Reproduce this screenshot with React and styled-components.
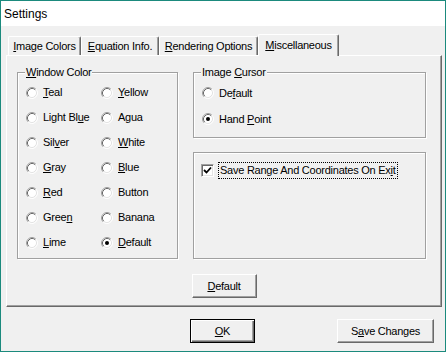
import React from "react";
import styled, { createGlobalStyle, css } from "styled-components";

const GlobalStyle = createGlobalStyle`
  html, body {
    margin: 0;
    padding: 0;
    background: #ffffff;
  }
  body {
    font-family: "Liberation Sans", Arial, sans-serif;
    font-size: 11px;
    color: #000;
  }
`;

const Window = styled.div`
  width: 446px;
  height: 352px;
  box-sizing: border-box;
  border: 1px solid #1b8a7d;
  background: #f0f0f0;
  display: flex;
  flex-direction: column;
`;

const TitleBar = styled.div`
  height: 25px;
  flex: none;
  background: #ffffff;
  display: flex;
  align-items: center;
  padding-left: 3px;
  font-size: 12px;
`;

const Body = styled.div`
  flex: 1;
  padding: 8px 3px 0 5px;
  display: flex;
  flex-direction: column;
  letter-spacing: -0.25px;
`;

const TabRow = styled.div`
  display: flex;
  align-items: flex-end;
  height: 21px;
  padding-left: 2px;
`;

const Tab = styled.div`
  width: ${(p) => p.$w}px;
  height: ${(p) => (p.$active ? 22 : 19)}px;
  margin-bottom: ${(p) => (p.$active ? -1 : 0)}px;
  padding-bottom: ${(p) => (p.$active ? 2 : 0)}px;
  box-sizing: border-box;
  position: relative;
  z-index: ${(p) => (p.$active ? 1 : 0)};
  border-top: 1px solid #ffffff;
  border-left: 1px solid #ffffff;
  border-right: 1px solid #696969;
  box-shadow: inset -1px 0 #a0a0a0;
  border-radius: 2px 2px 0 0;
  background: #f0f0f0;
  display: flex;
  align-items: center;
  justify-content: center;
  white-space: nowrap;
`;

const Panel = styled.div`
  height: 252px;
  box-sizing: border-box;
  border-top: 1px solid #ffffff;
  border-left: 1px solid #ffffff;
  border-right: 1px solid #696969;
  border-bottom: 1px solid #696969;
  box-shadow: inset -1px -1px #a0a0a0;
  display: flex;
  flex-direction: column;
`;

const Columns = styled.div`
  display: grid;
  grid-template-columns: 161px 233px;
  column-gap: 15px;
  height: 187px;
  margin: 16px 0 0 10px;
`;

const Stack = styled.div`
  display: flex;
  flex-direction: column;
  gap: 14px;
`;

const Group = styled.div`
  position: relative;
  box-sizing: border-box;
  height: ${(p) => p.$h}px;
  border: 1px solid #a0a0a0;
  box-shadow: inset 1px 1px #ffffff, 1px 1px #ffffff;
  padding: ${(p) => p.$pad};
`;

const Legend = styled.span`
  position: absolute;
  top: -7px;
  left: 7px;
  padding: 0 1px;
  line-height: 13px;
  background: #f0f0f0;
`;

const RadioGrid = styled.div`
  display: grid;
  grid-template-columns: 75px auto;
  grid-auto-rows: 25px;
`;

const RadioList = styled.div`
  display: grid;
  grid-auto-rows: 26px;
`;

const Option = styled.div`
  display: flex;
  align-items: center;
  gap: 5px;
  line-height: 13px;
  white-space: nowrap;
`;

const Check = styled.span`
  width: 13px;
  height: 13px;
  box-sizing: border-box;
  flex: none;
  background: #ffffff;
  border-top: 1px solid #a0a0a0;
  border-left: 1px solid #a0a0a0;
  border-right: 1px solid #ffffff;
  border-bottom: 1px solid #ffffff;
  box-shadow: inset 1px 1px #696969, inset -1px -1px #e3e3e3;
  display: flex;
  align-items: center;
  justify-content: center;
`;

const Focus = styled.span`
  outline: 1px dotted #000;
  outline-offset: 0;
  padding: 1px 1px;
  line-height: 13px;
`;

const ButtonRow = styled.div`
  display: flex;
  justify-content: ${(p) => p.$justify || "flex-start"};
  gap: ${(p) => p.$gap || 0}px;
  margin-top: ${(p) => p.$top}px;
  padding-left: ${(p) => p.$left || 0}px;
`;

const Button = styled.button`
  font: inherit;
  letter-spacing: inherit;
  color: #000;
  width: ${(p) => p.$w}px;
  height: 24px;
  padding: 0;
  box-sizing: border-box;
  background: #f0f0f0;
  border: 1px solid;
  border-color: #ffffff #696969 #696969 #ffffff;
  box-shadow: inset -1px -1px #a0a0a0;
  ${(p) =>
    p.$primary &&
    css`
      border-color: #000;
      box-shadow: inset 1px 1px #ffffff, inset -1px -1px #696969,
        inset -2px -2px #a0a0a0;
    `}
`;

function Radio({ checked }) {
  return (
    <svg width="12" height="12" viewBox="0 0 12 12" style={{ flex: "none" }}>
      <circle cx="6" cy="6" r="5" fill="#ffffff" />
      <path d="M2.11 9.89 A5.5 5.5 0 0 1 9.89 2.11" stroke="#a0a0a0" fill="none" />
      <path d="M9.89 2.11 A5.5 5.5 0 0 1 2.11 9.89" stroke="#ffffff" fill="none" />
      <path d="M2.82 9.18 A4.5 4.5 0 0 1 9.18 2.82" stroke="#696969" fill="none" />
      <path d="M9.18 2.82 A4.5 4.5 0 0 1 2.82 9.18" stroke="#e3e3e3" fill="none" />
      {checked && <circle cx="6" cy="6" r="2" fill="#000" />}
    </svg>
  );
}

const colors = [
  [<><u>T</u>eal</>, false],
  [<><u>Y</u>ellow</>, false],
  [<>Light Bl<u>u</u>e</>, false],
  [<>Agua</>, false],
  [<>Sil<u>v</u>er</>, false],
  [<><u>W</u>hite</>, false],
  [<><u>G</u>ray</>, false],
  [<><u>B</u>lue</>, false],
  [<><u>R</u>ed</>, false],
  [<>Button</>, false],
  [<>Gree<u>n</u></>, false],
  [<>Banana</>, false],
  [<><u>L</u>ime</>, false],
  [<><u>D</u>efault</>, true],
];

export default function App() {
  return (
    <>
      <GlobalStyle />
      <Window>
        <TitleBar>Settings</TitleBar>
        <Body>
          <TabRow>
            <Tab $w={73}><span><u>I</u>mage Colors</span></Tab>
            <Tab $w={78}><span><u>E</u>quation Info.</span></Tab>
            <Tab $w={99}><span><u>R</u>endering Options</span></Tab>
            <Tab $w={81} $active><span><u>M</u>iscellaneous</span></Tab>
          </TabRow>
          <Panel>
            <Columns>
              <Group $h={187} $pad="7px 0 0 8px">
                <Legend><u>W</u>indow Color</Legend>
                <RadioGrid>
                  {colors.map(([label, checked], i) => (
                    <Option key={i}>
                      <Radio checked={checked} />
                      <span>{label}</span>
                    </Option>
                  ))}
                </RadioGrid>
              </Group>
              <Stack>
                <Group $h={66} $pad="7px 0 0 8px">
                  <Legend>Image <u>C</u>ursor</Legend>
                  <RadioList>
                    <Option>
                      <Radio />
                      <span>De<u>f</u>ault</span>
                    </Option>
                    <Option>
                      <Radio checked />
                      <span>Hand <u>P</u>oint</span>
                    </Option>
                  </RadioList>
                </Group>
                <Group $h={107} $pad="10px 0 0 7px">
                  <Option>
                    <Check>
                      <svg width="9" height="9" viewBox="0 0 9 9">
                        <path d="M1 4 L3.5 6.5 L8 1.5" stroke="#000" strokeWidth="1.8" fill="none" />
                      </svg>
                    </Check>
                    <Focus>Save Range And Coordinates On Ex<u>i</u>t</Focus>
                  </Option>
                </Group>
              </Stack>
            </Columns>
            <ButtonRow $justify="center" $top={15}>
              <Button $w={65}><u>D</u>efault</Button>
            </ButtonRow>
          </Panel>
          <ButtonRow $top={12} $left={184} $gap={82}>
            <Button $w={65} $primary><u>O</u>K</Button>
            <Button $w={97}>S<u>a</u>ve Changes</Button>
          </ButtonRow>
        </Body>
      </Window>
    </>
  );
}
